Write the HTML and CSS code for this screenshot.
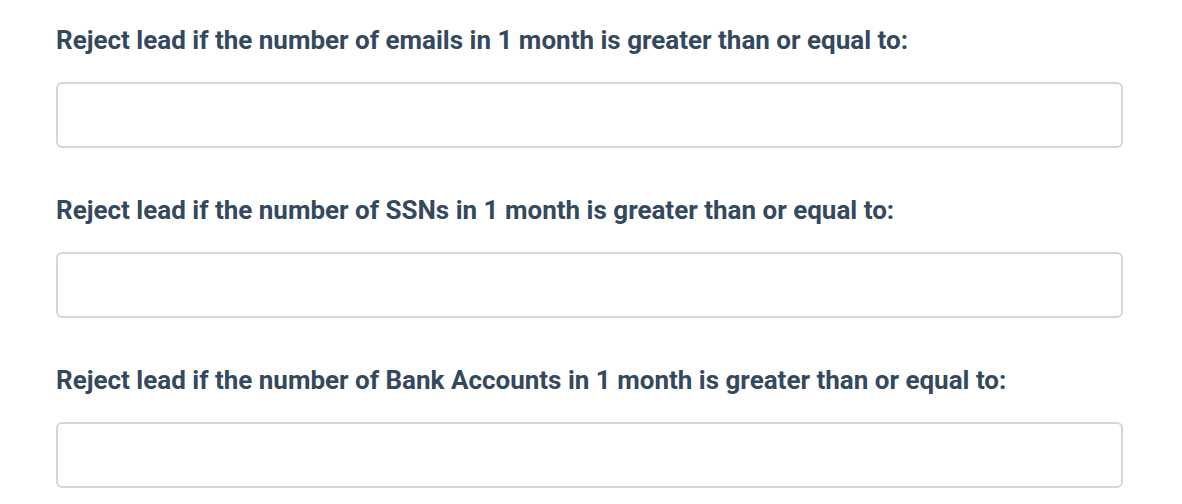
FILE: index.html
```html
<!DOCTYPE html>
<html lang="en">

<head>
    <meta charset="UTF-8">
    <meta name="viewport" content="width=device-width, initial-scale=1.0">
    <title>Lead Rejection Rules</title>
    <link rel="stylesheet" href="styles.css">
</head>

<body>

    <div class="rules">
        <div class="field">
            <label for="emailLimit">Reject lead if the number of emails in 1 month is greater than or equal to:</label>
            <input type="text" id="emailLimit">
        </div>
        <div class="field">
            <label for="ssnLimit">Reject lead if the number of SSNs in 1 month is greater than or equal to:</label>
            <input type="text" id="ssnLimit">
        </div>
        <div class="field">
            <label for="bankLimit">Reject lead if the number of Bank Accounts in 1 month is greater than or equal to:</label>
            <input type="text" id="bankLimit">
        </div>
    </div>

</body>

</html>
```

FILE: styles.css
```css
* {
    margin: 0;
    padding: 0;
    box-sizing: border-box;
    font-family: 'Roboto', sans-serif;
}

body {
    background-color: white;
    color: #34495e;
}

.rules {
    display: flex;
    flex-direction: column;
    gap: 44px;
    padding: 22px 59px 0 56px;
}

.field {
    display: flex;
    flex-direction: column;
    gap: 24px;
}

.field label {
    font-size: 26px;
    font-weight: 700;
    line-height: 36px;
}

.field input {
    width: 100%;
    height: 66px;
    border: 2px solid #d3d7dd;
    border-radius: 6px;
    background: white;
    font-size: 20px;
    padding: 0 16px;
    outline: none;
}
```
